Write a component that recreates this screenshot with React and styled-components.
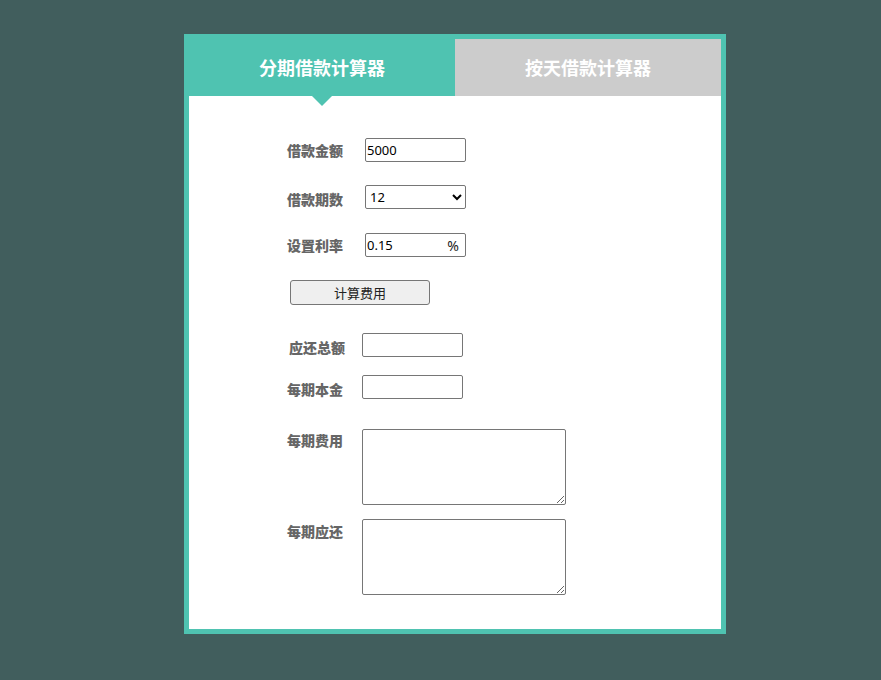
import React from 'react';
import styled, { createGlobalStyle } from 'styled-components';

const GlobalStyle = createGlobalStyle`
  html, body {
    margin: 0;
    padding: 0;
    background: #415e5d;
    font-family: "Noto Sans", "Noto Sans CJK SC", sans-serif;
  }
`;

const Page = styled.div`
  padding: 34px 0 46px 184px;
`;

const Card = styled.div`
  width: 532px;
  border: 5px solid #4fc3b1;
  background: #fff;
`;

const Tabs = styled.div`
  display: flex;
  height: 57px;
`;

const Tab = styled.div`
  position: relative;
  flex: 1;
  display: flex;
  align-items: center;
  justify-content: center;
  background: ${props => (props.$active ? '#4fc3b1' : '#cccccc')};
  color: #fff;
  font-family: "Noto Sans CJK SC", sans-serif;
  font-size: 18px;
  font-weight: bold;
  padding-bottom: 2px;
  box-sizing: border-box;

  ${props =>
    props.$active
      ? `
    &::after {
      content: '';
      position: absolute;
      left: 50%;
      bottom: -10px;
      margin-left: -10px;
      border-left: 10px solid transparent;
      border-right: 10px solid transparent;
      border-top: 10px solid #4fc3b1;
    }
  `
      : ''}
`;

const Body = styled.div`
  height: 533px;
  box-sizing: border-box;
  padding: 0 0 0 98px;
  display: flex;
  flex-direction: column;
`;

const Row = styled.div`
  display: flex;
  align-items: ${props => (props.$top ? 'flex-start' : 'center')};
  margin-top: ${props => props.$gap}px;
`;

const Label = styled.label`
  width: ${props => props.$width}px;
  flex-shrink: 0;
  padding-left: ${props => props.$indent || 0}px;
  padding-top: ${props => props.$offset || 0}px;
  box-sizing: border-box;
  color: #666;
  font-family: "Noto Sans CJK SC", sans-serif;
  font-size: 14px;
  font-weight: 900;
  line-height: 20px;
`;

const fieldBase = `
  box-sizing: border-box;
  border: 1px solid #767676;
  border-radius: 2px;
  background: #fff;
  font-family: "Noto Sans", "Noto Sans CJK SC", sans-serif;
  font-size: 13px;
  color: #000;
  outline: none;
`;

const Input = styled.input`
  ${fieldBase}
  width: 101px;
  height: 24px;
  padding: 0 1px;
`;

const Select = styled.select`
  ${fieldBase}
  width: 101px;
  height: 24px;
  padding: 0;
`;

const RateBox = styled.div`
  position: relative;
`;

const Unit = styled.span`
  position: absolute;
  right: 7px;
  top: 3px;
  font-size: 14px;
  color: #222;
  font-family: "Noto Sans", sans-serif;
`;

const Button = styled.button`
  width: 140px;
  height: 25px;
  margin-left: 3px;
  box-sizing: border-box;
  border: 1px solid #767676;
  border-radius: 3px;
  background: #efefef;
  color: #222;
  font-family: "Noto Sans CJK SC", sans-serif;
  font-size: 13px;
  padding: 0;
`;

const TextArea = styled.textarea`
  ${fieldBase}
  width: 204px;
  height: 76px;
  resize: both;
`;

export default function App() {
  return (
    <Page>
      <GlobalStyle />
      <Card>
        <Tabs>
          <Tab $active>分期借款计算器</Tab>
          <Tab>按天借款计算器</Tab>
        </Tabs>
        <Body>
          <Row $gap={42}>
            <Label $width={78}>借款金额</Label>
            <Input defaultValue="5000" />
          </Row>
          <Row $gap={23}>
            <Label $width={78} $offset={4}>借款期数</Label>
            <Select defaultValue="12">
              <option value="3">3</option>
              <option value="6">6</option>
              <option value="12">12</option>
              <option value="24">24</option>
            </Select>
          </Row>
          <Row $gap={24}>
            <Label $width={78}>设置利率</Label>
            <RateBox>
              <Input defaultValue="0.15" />
              <Unit>%</Unit>
            </RateBox>
          </Row>
          <Row $gap={23}>
            <Button>计算费用</Button>
          </Row>
          <Row $gap={28}>
            <Label $width={75} $indent={2} $offset={4}>应还总额</Label>
            <Input />
          </Row>
          <Row $gap={18}>
            <Label $width={75} $offset={4}>每期本金</Label>
            <Input />
          </Row>
          <Row $gap={30} $top>
            <Label $width={75} $offset={1}>每期费用</Label>
            <TextArea />
          </Row>
          <Row $gap={14} $top>
            <Label $width={75} $offset={2}>每期应还</Label>
            <TextArea />
          </Row>
        </Body>
      </Card>
    </Page>
  );
}
